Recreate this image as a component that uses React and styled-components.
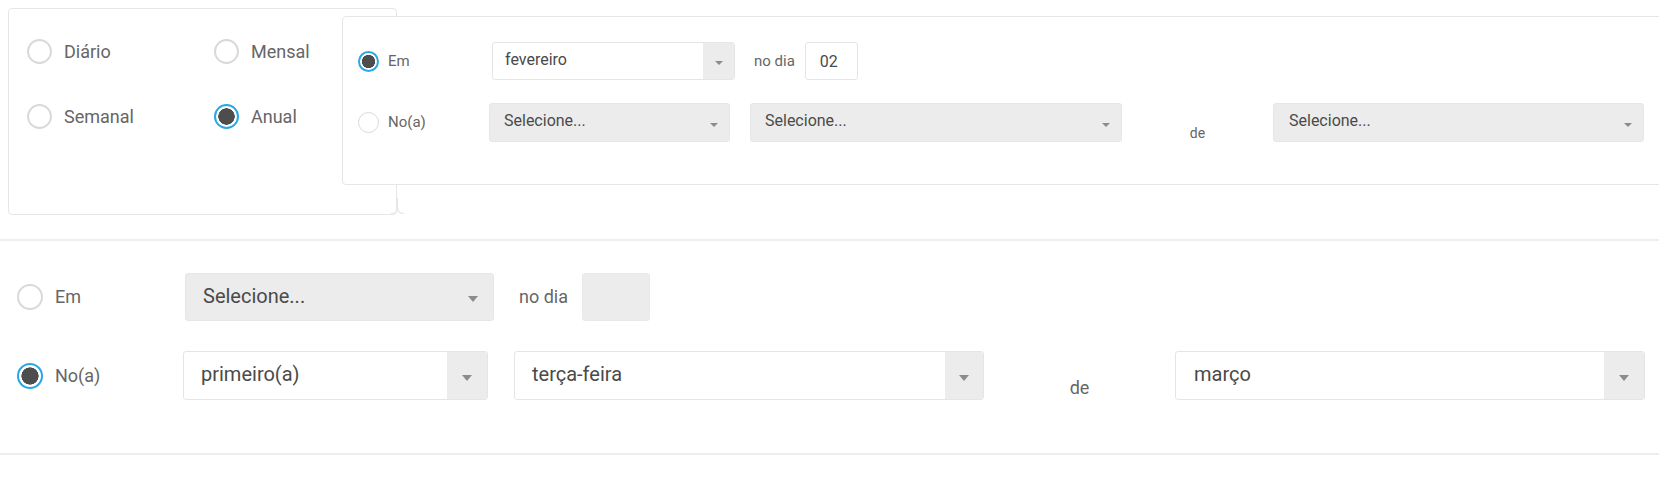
import React from "react";
import styled, { createGlobalStyle } from "styled-components";

const Global = createGlobalStyle`
  html, body { margin: 0; padding: 0; background: #fff; }
  body { font-family: Roboto, "Liberation Sans", Arial, sans-serif; color: #5a5a5a; }
  * { box-sizing: border-box; }
`;

const Page = styled.div`
  width: 100%;
  overflow: hidden;
`;

const TopSection = styled.section`
  position: relative;
  display: flex;
  align-items: flex-start;
  height: 241px;
  border-bottom: 2px solid #eceef0;
  overflow: hidden;
`;

const LeftCard = styled.div`
  flex-shrink: 0;
  margin: 8px 0 0 8px;
  width: 389px;
  height: 207px;
  border: 1px solid #e4e7ea;
  border-radius: 4px;
  padding: 30px 0 0 18px;
  display: grid;
  grid-template-columns: 187px 187px;
  grid-auto-rows: 25px;
  row-gap: 40px;
`;

const RightCard = styled.div`
  position: relative;
  z-index: 1;
  flex: 1;
  margin: 16px -30px 0 -55px;
  height: 169px;
  background: #fff;
  border: 1px solid #e4e7ea;
  border-radius: 4px;
  padding: 25px 0 0 15px;
  display: flex;
  flex-direction: column;
  gap: ${(p) => p.$gap}px;
`;

const Notch = styled.svg`
  position: absolute;
  left: 391px;
  top: 197px;
`;

const BottomSection = styled.section`
  height: 214px;
  border-bottom: 2px solid #eceef0;
  padding: 32px 0 0 17px;
  display: flex;
  flex-direction: column;
  gap: 30px;
`;

const Row = styled.div`
  display: flex;
  align-items: center;
  height: ${(p) => p.$h}px;
`;

const Option = styled.label`
  display: flex;
  align-items: center;
  gap: ${(p) => p.$gap}px;
  width: ${(p) => (p.$w ? `${p.$w}px` : "auto")};
  flex-shrink: 0;
  font-size: ${(p) => p.$fs}px;
  color: #666;
  line-height: 1;
`;

const Radio = styled.span`
  flex-shrink: 0;
  width: ${(p) => p.$size}px;
  height: ${(p) => p.$size}px;
  border-radius: 50%;
  ${(p) =>
    p.$checked
      ? `
    border: ${p.$size > 22 ? 2.5 : 2}px solid #27a8e6;
    background: radial-gradient(circle closest-side, #4d4d4d 76%, #fff 80%);
  `
      : `
    background: #fff;
    border: ${p.$size > 22 ? 2 : 1.5}px solid #d9d9d9;
  `}
`;

const SelectBox = styled.div`
  position: relative;
  flex-shrink: 0;
  display: flex;
  align-items: center;
  width: ${(p) => p.$w}px;
  height: ${(p) => p.$h}px;
  margin-left: ${(p) => p.$ml || 0}px;
  border: 1px solid ${(p) => (p.$filled ? "#e6e6e6" : "#e3e6e9")};
  border-radius: 3px;
  background: ${(p) => (p.$filled ? "#ececec" : "#fff")};
  padding-left: ${(p) => p.$pl}px;
  font-size: ${(p) => p.$fs}px;
  color: #4a4a4a;
  overflow: hidden;
`;

const SelectText = styled.span`
  flex: 1;
  line-height: 1;
  margin-top: -3px;
`;

const ArrowCell = styled.span`
  align-self: stretch;
  width: ${(p) => p.$w}px;
  background: #ececec;
  display: flex;
  align-items: center;
  justify-content: center;
  padding-top: 4px;
`;

const Caret = styled.span`
  width: 0;
  height: 0;
  border-left: ${(p) => p.$s}px solid transparent;
  border-right: ${(p) => p.$s}px solid transparent;
  border-top: ${(p) => p.$s * 1.2}px solid #8c8c8c;
`;

const Word = styled.span`
  flex-shrink: 0;
  margin-left: ${(p) => p.$ml}px;
  font-size: ${(p) => p.$fs}px;
  color: #666;
  line-height: 1;
`;

const DayInput = styled.div`
  flex-shrink: 0;
  display: flex;
  align-items: center;
  width: ${(p) => p.$w}px;
  height: ${(p) => p.$h}px;
  margin-left: ${(p) => p.$ml}px;
  padding-left: 14px;
  border: 1px solid ${(p) => (p.$filled ? "#e8e8e8" : "#e3e6e9")};
  border-radius: 3px;
  background: ${(p) => (p.$filled ? "#ececec" : "#fff")};
  font-size: ${(p) => p.$fs}px;
  color: #4a4a4a;
`;

const DeCell = styled.span`
  flex-shrink: 0;
  width: ${(p) => p.$w}px;
  text-align: center;
  padding-top: ${(p) => p.$dy}px;
  font-size: ${(p) => p.$fs}px;
  color: #666;
  line-height: 1;
`;

function Select({ w, h, ml, filled, pl, fs, arrow, caret, children }) {
  return (
    <SelectBox $w={w} $h={h} $ml={ml} $filled={filled} $pl={pl} $fs={fs}>
      <SelectText>{children}</SelectText>
      <ArrowCell $w={arrow}>
        <Caret $s={caret} />
      </ArrowCell>
    </SelectBox>
  );
}

function RadioOption({ checked, size, gap, fs, w, children }) {
  return (
    <Option $gap={gap} $fs={fs} $w={w}>
      <Radio $checked={checked} $size={size} />
      {children}
    </Option>
  );
}

export default function App() {
  return (
    <Page>
      <Global />
      <TopSection>
        <LeftCard>
          <RadioOption size={25} gap={12} fs={18}>Diário</RadioOption>
          <RadioOption size={25} gap={12} fs={18}>Mensal</RadioOption>
          <RadioOption size={25} gap={12} fs={18}>Semanal</RadioOption>
          <RadioOption size={25} gap={12} fs={18} checked>Anual</RadioOption>
        </LeftCard>
        <Notch width="16" height="20" viewBox="0 0 16 20">
          <path d="M0 16.5 Q6.5 16.5 6.5 11 L6.5 1 M6.5 11 Q6.5 16.5 13 16.5" fill="none" stroke="#e4e7ea" strokeWidth="1.2" />
        </Notch>
        <RightCard $gap={23}>
          <Row $h={38}>
            <RadioOption size={21} gap={9} fs={15} w={134} checked>Em</RadioOption>
            <Select w={243} h={38} pl={12} fs={16} arrow={31} caret={4}>fevereiro</Select>
            <Word $ml={19} $fs={15}>no dia</Word>
            <DayInput $w={53} $h={38} $ml={10} $fs={16}>02</DayInput>
          </Row>
          <Row $h={39}>
            <RadioOption size={21} gap={9} fs={15} w={131}>No(a)</RadioOption>
            <Select w={241} h={39} pl={14} fs={16} arrow={31} caret={4} filled>Selecione...</Select>
            <Select w={372} h={39} ml={20} pl={14} fs={16} arrow={31} caret={4} filled>Selecione...</Select>
            <DeCell $w={151} $dy={20} $fs={14}>de</DeCell>
            <Select w={371} h={39} pl={15} fs={16} arrow={31} caret={4} filled>Selecione...</Select>
          </Row>
        </RightCard>
      </TopSection>
      <BottomSection>
        <Row $h={48}>
          <RadioOption size={26} gap={12} fs={18} w={168}>Em</RadioOption>
          <Select w={309} h={48} pl={17} fs={20} arrow={40} caret={5} filled>Selecione...</Select>
          <Word $ml={25} $fs={18}>no dia</Word>
          <DayInput $w={68} $h={48} $ml={14} $fs={20} $filled />
        </Row>
        <Row $h={49}>
          <RadioOption size={26} gap={12} fs={18} w={166} checked>No(a)</RadioOption>
          <Select w={305} h={49} pl={17} fs={20} arrow={40} caret={5}>primeiro(a)</Select>
          <Select w={470} h={49} ml={26} pl={17} fs={20} arrow={38} caret={5}>terça-feira</Select>
          <DeCell $w={191} $dy={24} $fs={18}>de</DeCell>
          <Select w={470} h={49} pl={18} fs={20} arrow={40} caret={5}>março</Select>
        </Row>
      </BottomSection>
    </Page>
  );
}
